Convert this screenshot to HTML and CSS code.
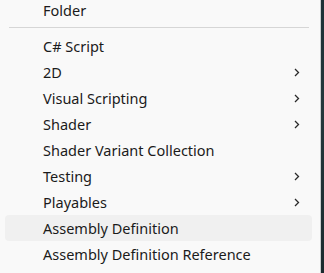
FILE: index.html
```html
<!DOCTYPE html>
<html lang="en">
<head>
    <meta charset="UTF-8">
    <title>Create menu</title>
    <link rel="stylesheet" href="styles.css">
</head>
<body>
    <div class="screen">
        <div class="menu">
            <div class="item">Folder</div>
            <div class="separator"></div>
            <div class="item">C# Script</div>
            <div class="item sub">2D <svg class="chevron" width="6" height="9" viewBox="0 0 6 9"><path d="M1 1 L4.5 4.5 L1 8" /></svg></div>
            <div class="item sub">Visual Scripting <svg class="chevron" width="6" height="9" viewBox="0 0 6 9"><path d="M1 1 L4.5 4.5 L1 8" /></svg></div>
            <div class="item sub">Shader <svg class="chevron" width="6" height="9" viewBox="0 0 6 9"><path d="M1 1 L4.5 4.5 L1 8" /></svg></div>
            <div class="item">Shader Variant Collection</div>
            <div class="item sub">Testing <svg class="chevron" width="6" height="9" viewBox="0 0 6 9"><path d="M1 1 L4.5 4.5 L1 8" /></svg></div>
            <div class="item sub">Playables <svg class="chevron" width="6" height="9" viewBox="0 0 6 9"><path d="M1 1 L4.5 4.5 L1 8" /></svg></div>
            <div class="item hover">Assembly Definition</div>
            <div class="item">Assembly Definition Reference</div>
        </div>
        <div class="backdrop"></div>
    </div>
</body>
</html>
```

FILE: styles.css
```css
* {
    box-sizing: border-box;
    margin: 0;
    padding: 0;
}

body {
    font-family: 'Noto Sans', 'Open Sans', sans-serif;
    font-size: 14.5px;
    color: #1b1b1b;
    background-color: #1d2b2f;
    overflow: hidden;
}

.screen {
    display: flex;
    height: 273px;
}

.menu {
    width: 321px;
    height: 276px;
    background-color: #f9f9f9;
    border-right: 1px solid #c9cdce;
    margin-top: -3px;
}

.backdrop {
    flex: 1;
    background: linear-gradient(180deg, #1c3036 0%, #24383c 40%, #1a2a2e 100%);
}

.item {
    display: flex;
    align-items: center;
    justify-content: space-between;
    height: 26px;
    margin: 0 8px 0 5px;
    padding: 0 12px 0 38px;
    border-radius: 4px;
    white-space: nowrap;
}

.item.hover {
    background-color: #f0f0f0;
}

.chevron path {
    fill: none;
    stroke: #2a2a2a;
    stroke-width: 1.3;
}

.separator {
    height: 1px;
    background-color: #d6d6d6;
    margin: 4px 11px 5px 9px;
}
```
